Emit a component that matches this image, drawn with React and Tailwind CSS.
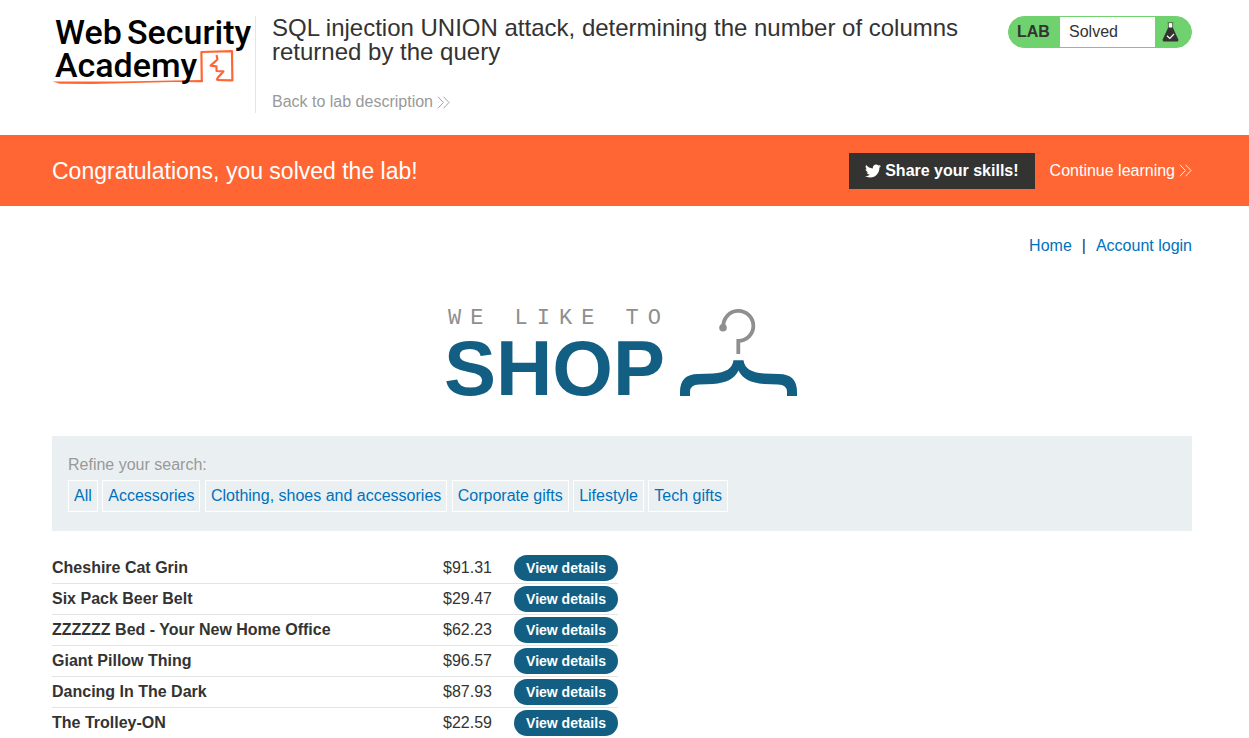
import { Fragment } from 'react';
import { FaTwitter } from 'react-icons/fa';

const categories = [
  'All',
  'Accessories',
  'Clothing, shoes and accessories',
  'Corporate gifts',
  'Lifestyle',
  'Tech gifts',
];

const products = [
  { name: 'Cheshire Cat Grin', price: '$91.31' },
  { name: 'Six Pack Beer Belt', price: '$29.47' },
  { name: 'ZZZZZZ Bed - Your New Home Office', price: '$62.23' },
  { name: 'Giant Pillow Thing', price: '$96.57' },
  { name: 'Dancing In The Dark', price: '$87.93' },
  { name: 'The Trolley-ON', price: '$22.59' },
];

function DoubleChevron() {
  return (
    <svg width="13" height="13" viewBox="0 0 13 13" fill="none" stroke="currentColor" strokeWidth="0.9" aria-hidden="true">
      <path d="M1 0.8 L6.4 6.5 L1 12.2 M6.6 0.8 L12 6.5 L6.6 12.2" />
    </svg>
  );
}

function AcademyLogo() {
  return (
    <svg width="200" height="74" viewBox="0 0 200 74" className="overflow-visible" role="img" aria-label="Web Security Academy">
      <g fill="none" stroke="#ff6633" strokeWidth="2.2" strokeLinejoin="round">
        <path d="M149.8 67 L149.4 37 L180 36.2 L180.4 65.4 L164.6 65" />
        <path d="M164.6 40 L165.4 44.5 L158.6 50.6 L164.4 51.4 L164.6 56 L171.4 56.4 L166 62.5 L164.6 65" />
      </g>
      <path d="M0.5 66.6 L70 66.4 L120 65.4 L150.6 65 L150.4 67.2 L120 67 L80 68 L40 69 L8 68.8 Z" fill="#ff6633" />
      <g fontFamily="Roboto, sans-serif" fontSize="34" fontWeight="500">
        <text x="3" y="29">Web</text>
        <text x="75" y="29">Security</text>
        <text x="3" y="62">Academy</text>
      </g>
    </svg>
  );
}

function Flask() {
  return (
    <svg width="17" height="20" viewBox="0 0 17 20" aria-hidden="true">
      <path d="M6.6 1 V6 H10.4 V1 Z" fill="#fff" />
      <path d="M5.6 0.7 H11.4 M6.4 1 V6 M10.6 6 V1" fill="none" stroke="#333332" strokeWidth="0.6" />
      <path d="M6.2 5.6 H10.8 L16.2 17.2 Q16.8 19.6 14.8 19.6 H2.2 Q0.2 19.6 0.8 17.2 Z" fill="#333332" />
      <path d="M5 13.8 L7.8 16.4 L12 12" fill="none" stroke="#fff" strokeWidth="1.2" />
    </svg>
  );
}

function Hanger() {
  return (
    <svg width="118" height="90" viewBox="0 0 118 90" aria-hidden="true">
      <path d="M43.4 19 A15 15 0 1 1 58.3 32.9 V46" fill="none" stroke="#8f8f8f" strokeWidth="3.8" />
      <circle cx="43" cy="19.7" r="3.8" fill="#8f8f8f" />
      <path
        d="M0 88 V84 Q0 66 18 66 L33 65.4 Q52 64.5 53.5 52.3 H63.5 Q65 64.5 84 65.4 L99 66 Q117 66 117 84 V88 H107 V84 Q107 76.5 98 76.5 L84 76 Q64 74.5 58.5 62.5 Q53 74.5 33 76 L19 76.5 Q10 76.5 10 84 V88 Z"
        fill="#125f83"
      />
    </svg>
  );
}

function LabHeader() {
  return (
    <header className="flex h-[135px] items-start pt-4 pr-[57px] pl-[52px]">
      <a href="#academy" className="-mt-px shrink-0"><AcademyLogo /></a>
      <div className="ml-[3px] flex h-[97px] min-w-0 flex-1 flex-col items-start border-l border-[#e4e4e4] pl-4">
        <h1 className="max-w-[700px] text-2xl leading-6">
          SQL injection UNION attack, determining the number of columns returned by the query
        </h1>
        <a href="#lab" className="mt-[26px] flex items-center gap-1 text-base leading-6 text-[#999]">
          Back to lab description
          <DoubleChevron />
        </a>
      </div>
      <div className="flex h-8 w-[184px] shrink-0 overflow-hidden rounded-full border border-[#70d16f] bg-[#70d16f] leading-[30px]">
        <span className="w-[51px] pl-2 font-bold">LAB</span>
        <span className="flex-1 bg-white pl-[9px]">Solved</span>
        <span className="flex w-9 items-center pl-[7px]"><Flask /></span>
      </div>
    </header>
  );
}

function SolvedBanner() {
  return (
    <section className="flex h-[71px] items-center bg-[#ff6633] pr-[57px] pl-[52px] text-white">
      <h2 className="flex-1 text-[23px] leading-8">Congratulations, you solved the lab!</h2>
      <button type="button" className="flex h-9 cursor-pointer items-center gap-1 bg-[#333332] px-4 font-bold">
        <FaTwitter size={16} />
        Share your skills!
      </button>
      <a href="#learning" className="ml-[15px] flex items-center gap-1">
        Continue learning
        <DoubleChevron />
      </a>
    </section>
  );
}

function ShopLogo() {
  return (
    <div className="mt-[50px] flex h-[90px] justify-center gap-2.5 pr-0.5">
      <div className="flex flex-col">
        <span className="pl-1 font-['Liberation_Mono',monospace] text-[22px] leading-[22px] tracking-[9px] text-[#8f8f8f]">WE LIKE TO</span>
        <span className="text-[78px] leading-[76px] font-bold text-[#125f83]">SHOP</span>
      </div>
      <Hanger />
    </div>
  );
}

export default function App() {
  return (
    <div className="bg-white font-['Liberation_Sans',Arial,sans-serif] text-base text-[#333332]">
      <LabHeader />
      <SolvedBanner />
      <main className="pr-[57px] pl-[52px]">
        <nav className="flex justify-end gap-2.5 pt-7 leading-6">
          <a href="#home" className="text-[#0071bc]">Home</a>
          <span>|</span>
          <a href="#login" className="text-[#0071bc]">Account login</a>
        </nav>

        <ShopLogo />

        <section className="mt-[38px] h-[95px] bg-[#eaf0f2] px-4 pt-[17px]">
          <p className="leading-6 text-[#999]">Refine your search:</p>
          <div className="mt-[3px]">
            {categories.map(name => (
              <Fragment key={name}>
                <a href="#filter" className="inline-block h-8 border border-white px-[5px] leading-[30px] text-[#0071bc]">
                  {name}
                </a>{' '}
              </Fragment>
            ))}
          </div>
        </section>

        <table className="mt-[22px] w-[566px] border-separate border-spacing-0">
          <tbody>
            {products.map(({ name, price }) => (
              <tr key={name} className="h-[31px]">
                <th scope="row" className="border-b border-[#e4e4e4] p-0 text-left leading-6 font-bold">{name}</th>
                <td className="w-[71px] border-b border-[#e4e4e4] p-0 leading-6">{price}</td>
                <td className="w-[104px] border-b border-[#e4e4e4] p-0">
                  <a href="#product" className="block h-[26px] rounded-full bg-[#125f83] text-center text-sm leading-[26px] font-bold text-white">
                    View details
                  </a>
                </td>
              </tr>
            ))}
          </tbody>
        </table>
      </main>
    </div>
  );
}
